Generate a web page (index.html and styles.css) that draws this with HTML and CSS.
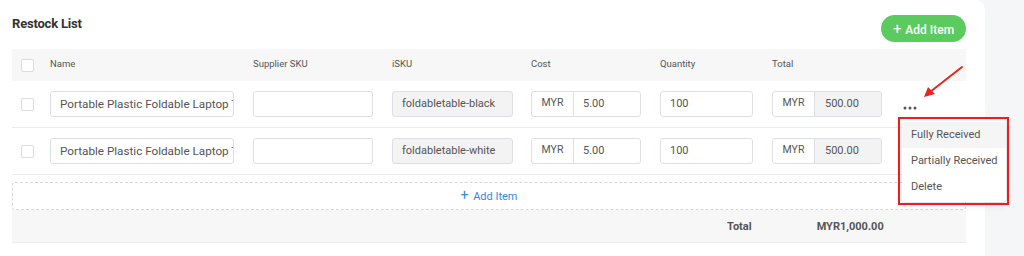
FILE: index.html
```html
<!DOCTYPE html>
<html>
<head>
<meta charset="utf-8">
<link rel="stylesheet" href="styles.css">
</head>
<body>
<div class="card">
  <div class="head">
    <div class="title">Restock List</div>
    <button class="btn-add"><span class="plus">+</span> Add Item</button>
  </div>
  <div class="table">
    <div class="row hrow">
      <div class="c"><span class="cb"></span></div>
      <div class="c">Name</div>
      <div class="c">Supplier SKU</div>
      <div class="c">iSKU</div>
      <div class="c">Cost</div>
      <div class="c">Quantity</div>
      <div class="c">Total</div>
      <div class="c"></div>
    </div>
    <div class="row brow">
      <div class="c"><span class="cb"></span></div>
      <div class="c"><div class="inp w-name">Portable Plastic Foldable Laptop Table</div></div>
      <div class="c"><div class="inp w-sup"></div></div>
      <div class="c"><div class="inp w-isku dis">foldabletable-black</div></div>
      <div class="c"><div class="grp"><span class="addon">MYR</span><span class="gv">5.00</span></div></div>
      <div class="c"><div class="inp w-qty">100</div></div>
      <div class="c"><div class="grp"><span class="addon">MYR</span><span class="gv dis">500.00</span></div></div>
      <div class="c">
        <svg class="dots" width="14" height="4" viewBox="0 0 14 4">
          <circle cx="2" cy="2" r="1.5" fill="#555"/>
          <circle cx="7" cy="2" r="1.5" fill="#555"/>
          <circle cx="12" cy="2" r="1.5" fill="#555"/>
        </svg>
      </div>
    </div>
    <div class="row brow">
      <div class="c"><span class="cb"></span></div>
      <div class="c"><div class="inp w-name">Portable Plastic Foldable Laptop Table</div></div>
      <div class="c"><div class="inp w-sup"></div></div>
      <div class="c"><div class="inp w-isku dis">foldabletable-white</div></div>
      <div class="c"><div class="grp"><span class="addon">MYR</span><span class="gv">5.00</span></div></div>
      <div class="c"><div class="inp w-qty">100</div></div>
      <div class="c"><div class="grp"><span class="addon">MYR</span><span class="gv dis">500.00</span></div></div>
      <div class="c"></div>
    </div>
    <div class="dashed"><span class="plus2">+</span> Add Item</div>
    <div class="totalrow">
      <span class="tl">Total</span>
      <span class="tv">MYR1,000.00</span>
    </div>
  </div>
</div>
<div class="menu">
  <div class="mi active">Fully Received</div>
  <div class="mi">Partially Received</div>
  <div class="mi">Delete</div>
</div>
<div class="redbox"></div>
<svg class="arrow" width="50" height="40" viewBox="0 0 50 40">
  <line x1="44" y1="3" x2="12" y2="28" stroke="#e8251f" stroke-width="2" stroke-linecap="round"/>
  <polygon points="6,33 10,23 17,30" fill="#e8251f"/>
</svg>
</body>
</html>
```
FILE: styles.css
```css
html, body {
  margin: 0;
  padding: 0;
}
body {
  width: 1024px;
  height: 256px;
  overflow: hidden;
  background: #f5f6f8;
  font-family: Roboto, "Liberation Sans", sans-serif;
  color: #555;
  position: relative;
}
.card {
  width: 961px;
  height: 256px;
  background: #fff;
  border-top-right-radius: 10px;
  padding: 0 12px;
  box-sizing: content-box;
}
.head {
  display: flex;
  justify-content: space-between;
  align-items: flex-start;
  width: 954px;
  height: 49px;
}
.title {
  font-size: 13px;
  font-weight: bold;
  color: #333;
  margin-top: 16px;
  line-height: 16px;
  letter-spacing: -0.2px;
}
.btn-add {
  margin-top: 15px;
  width: 85px;
  height: 27px;
  border: none;
  border-radius: 14px;
  background: #5ccb5f;
  color: #fff;
  font-family: Roboto, "Liberation Sans", sans-serif;
  font-size: 12px;
  font-weight: 500;
  padding: 0;
}
.btn-add .plus {
  font-size: 15px;
  font-weight: 400;
  margin-right: 1px;
}
.table {
  width: 954px;
}
.row {
  display: grid;
  grid-template-columns: 29px 203px 139px 139px 129px 112px 130px 1fr;
  padding-left: 9px;
  align-items: center;
}
.hrow {
  height: 32px;
  box-sizing: border-box;
  padding-bottom: 4px;
  background: #f7f7f7;
  font-size: 9.5px;
  color: #555;
}
.hrow .c:first-child { margin-top: 4px; }
.brow {
  height: 46px;
  border-bottom: 1px solid #ebebeb;
}
.c {
  display: flex;
  align-items: center;
}
.cb {
  width: 11px;
  height: 11px;
  border: 1px solid #dcdcdc;
  border-radius: 2px;
  background: #fff;
}
.inp, .grp {
  height: 24px;
  border: 1px solid #dcdfe6;
  border-radius: 3px;
  box-sizing: content-box;
  font-size: 11px;
  color: #555;
  line-height: 24px;
  background: #fff;
}
.inp {
  padding: 0 9px;
  white-space: nowrap;
  overflow: hidden;
  text-overflow: clip;
}
.w-name { width: 164px; font-size: 11.7px; }
.w-sup { width: 100px; }
.w-isku { width: 101px; }
.w-qty { width: 73px; }
.inp.dis { background: #f3f3f3; }
.grp {
  display: flex;
  width: 108px;
  overflow: hidden;
}
.addon {
  width: 41px;
  text-align: center;
  border-right: 1px solid #dcdfe6;
  font-size: 10.5px;
  line-height: 22px;
}
.gv {
  flex: 1;
  padding-left: 9px;
}
.gv.dis { background: #f3f3f3; padding-left: 10px; }
.dots {
  display: block;
  margin-top: 8px;
  margin-left: 1px;
}
.dashed {
  margin-top: 7px;
  height: 26px;
  border: 1px dashed #d6d6d6;
  border-radius: 3px;
  text-align: center;
  line-height: 24px;
  font-size: 11px;
  color: #2f8be6;
  box-sizing: content-box;
}
.plus2 {
  font-size: 14px;
  margin-right: 2px;
}
.totalrow {
  height: 32px;
  background: #f7f7f7;
  border-bottom: 1px solid #ebebeb;
  display: flex;
  align-items: center;
  font-size: 11px;
  font-weight: bold;
  color: #555;
}
.tl { margin-left: 715px; }
.tv { margin-left: 65px; }
.menu {
  position: absolute;
  left: 902px;
  top: 120px;
  width: 104px;
  padding: 2px 0;
  background: #fff;
  border-radius: 4px;
  box-shadow: 0 2px 8px rgba(0,0,0,0.15);
}
.mi {
  height: 26px;
  line-height: 26px;
  padding-left: 9px;
  font-size: 11px;
  color: #555;
  white-space: nowrap;
}
.mi.active { background: #f5f5f5; }
.redbox {
  position: absolute;
  left: 898px;
  top: 117px;
  width: 107px;
  height: 84px;
  border: 2px solid #ee1c1c;
}
.arrow {
  position: absolute;
  left: 918px;
  top: 64px;
}
```
